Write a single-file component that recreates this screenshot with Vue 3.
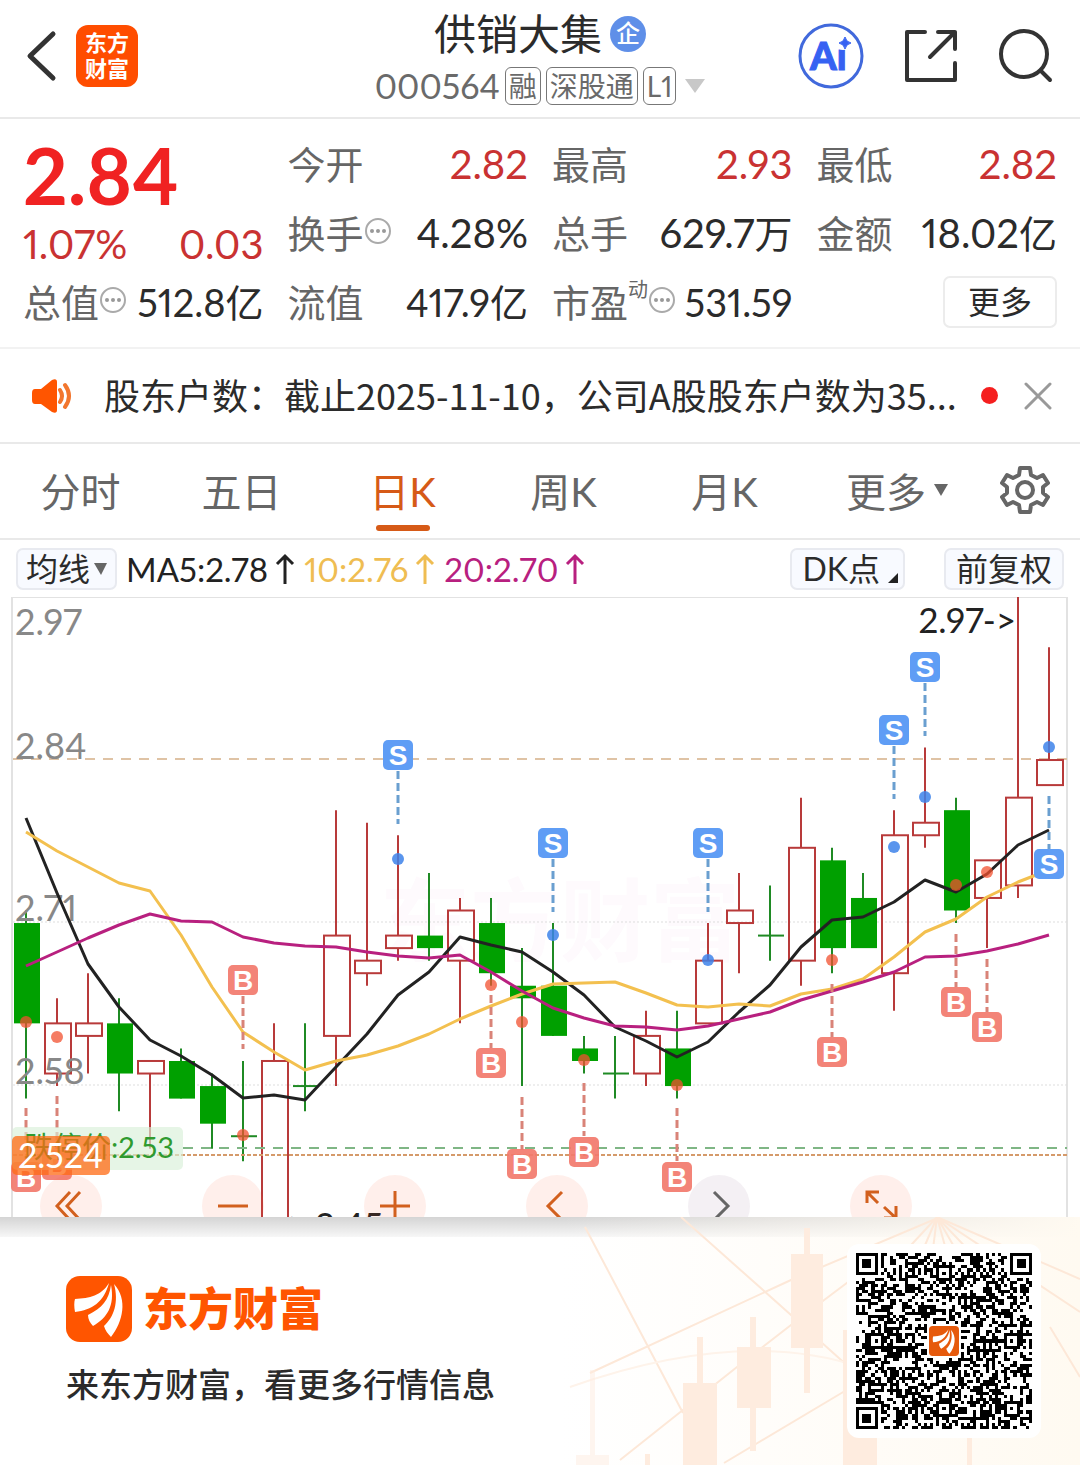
<script setup>
import { ref } from 'vue'

const activeTab = ref('日K')
const tabs = ['分时', '五日', '日K', '周K', '月K']

const quotes = [
  { label: '今开', value: '2.82', up: true },
  { label: '最高', value: '2.93', up: true },
  { label: '最低', value: '2.82', up: true },
  { label: '换手', value: '4.28%', info: true },
  { label: '总手', value: '629.7', unit: '万' },
  { label: '金额', value: '18.02', unit: '亿' },
  { label: '总值', value: '512.8', unit: '亿', info: true, compact: true },
  { label: '流值', value: '417.9', unit: '亿', compact: true },
  { label: '市盈', sup: '动', value: '531.59', info: true, compact: true },
]

const averages = [
  { text: 'MA5:2.78', cls: 'ma5' },
  { text: '10:2.76', cls: 'ma10' },
  { text: '20:2.70', cls: 'ma20' },
]

// Price to canvas coordinates: 2.97 sits on the top edge of the chart.
const px = (i) => 26 + i * 31
const py = (price) => (2.97 - price) * 1254

// [open, close, high, low]; equal open and close is drawn as a green cross
const ohlc = [
  [2.71, 2.63, 2.72, 2.57], [2.59, 2.63, 2.65, 2.58], [2.62, 2.63, 2.67, 2.59],
  [2.63, 2.59, 2.65, 2.56], [2.59, 2.6, 2.6, 2.53], [2.6, 2.57, 2.61, 2.57],
  [2.58, 2.55, 2.59, 2.53], [2.54, 2.54, 2.6, 2.52], [2.46, 2.6, 2.63, 2.45],
  [2.58, 2.58, 2.63, 2.56], [2.62, 2.7, 2.8, 2.58], [2.67, 2.68, 2.79, 2.66],
  [2.69, 2.7, 2.78, 2.68], [2.7, 2.69, 2.75, 2.68], [2.68, 2.72, 2.73, 2.63],
  [2.71, 2.67, 2.73, 2.66], [2.66, 2.65, 2.69, 2.58], [2.66, 2.62, 2.71, 2.62],
  [2.61, 2.6, 2.62, 2.59], [2.59, 2.59, 2.62, 2.57], [2.59, 2.62, 2.64, 2.58],
  [2.61, 2.58, 2.64, 2.57], [2.63, 2.68, 2.71, 2.63], [2.71, 2.72, 2.75, 2.67],
  [2.7, 2.7, 2.74, 2.68], [2.68, 2.77, 2.81, 2.66], [2.76, 2.69, 2.77, 2.67],
  [2.73, 2.69, 2.75, 2.69], [2.67, 2.78, 2.8, 2.64], [2.78, 2.79, 2.85, 2.77],
  [2.8, 2.72, 2.81, 2.71], [2.73, 2.76, 2.76, 2.69], [2.74, 2.81, 2.97, 2.73],
  [2.82, 2.84, 2.93, 2.82],
]
const candles = ohlc.map(([open, close, high, low], i) => ({
  x: px(i),
  up: close > open,
  doji: close === open,
  top: py(Math.max(open, close)),
  bottom: i === 8 ? 640 : py(Math.min(open, close)),
  high: py(high),
  low: i === 8 ? 640 : py(low),
}))

const line = (ys) => ys.map((y, i) => `${px(i)},${y - 597}`).join(' ')
const ma5 = line([818, 893, 964, 1007, 1040, 1056, 1075, 1098, 1095, 1100, 1067, 1034, 995, 972, 937, 945, 952, 972, 995, 1027, 1041, 1057, 1042, 1012, 985, 947, 920, 917, 902, 880, 892, 874, 845, 830])
const ma10 = line([832, 851, 867, 883, 891, 935, 987, 1032, 1052, 1070, 1061, 1055, 1046, 1034, 1019, 1006, 994, 984, 983, 982, 993, 1005, 1007, 1004, 1006, 994, 989, 979, 957, 932, 919, 897, 882, 870])
const ma20 = line([966, 952, 938, 925, 914, 921, 922, 937, 943, 946, 947, 952, 956, 958, 955, 972, 991, 1008, 1018, 1026, 1027, 1030, 1026, 1019, 1012, 1000, 991, 982, 972, 957, 956, 951, 944, 935])

// candle index, marker, badge centre, dot, start of the dashed stem
const signals = [
  [0, 'B', 580, 425, 511], [1, 'B', 568, 440, 499], [7, 'B', 383, 538, 399],
  [12, 'S', 158, 262, 174], [15, 'B', 466, 388, 398], [16, 'B', 567, 425, 500],
  [17, 'S', 246, 338, 262], [18, 'B', 555, 463, 486], [21, 'B', 580, 488, 511],
  [22, 'S', 246, 363, 262], [26, 'B', 455, 363, 387], [28, 'S', 133, 250, 149],
  [29, 'S', 70, 200, 86], [30, 'B', 405, 288, 337], [31, 'B', 430, 275, 362],
  [33, 'S', 267, 150, 199],
].map(([i, kind, badge, dot, stem]) => ({ x: px(i), kind, badge, dot, stem }))

const axis = [
  { text: '2.97', y: 38 },
  { text: '2.84', y: 162 },
  { text: '2.71', y: 324 },
  { text: '2.58', y: 487 },
]

// QR symbol: 57 modules with finder, alignment and timing patterns
const N = 57
function buildQr() {
  const g = Array.from({ length: N }, () => Array(N).fill(0))
  let seed = 564
  for (let r = 0; r < N; r++) {
    for (let c = 0; c < N; c++) {
      seed = (seed * 1103515245 + 12345) % 2147483648
      g[r][c] = (seed >> 16) & 1
    }
  }
  for (let k = 8; k < N - 8; k++) g[6][k] = g[k][6] = k % 2 ? 0 : 1
  // rings[n] is the colour of the square ring n modules away from the centre
  const square = (r0, c0, rings) => {
    const radius = rings.length - 1
    for (let r = -radius; r <= radius; r++) {
      for (let c = -radius; c <= radius; c++) {
        const row = g[r0 + r]
        if (row && c0 + c >= 0 && c0 + c < N) row[c0 + c] = rings[Math.max(Math.abs(r), Math.abs(c))]
      }
    }
  }
  for (const [r, c] of [[3, 3], [3, N - 4], [N - 4, 3]]) square(r, c, [1, 1, 0, 1, 0])
  for (const [r, c] of [[6, 28], [28, 6], [28, 50], [50, 28], [50, 50]]) square(r, c, [1, 0, 1])
  square(28, 28, [0, 0, 0, 0, 0, 0])
  let d = ''
  g.forEach((row, r) => row.forEach((v, c) => { if (v) d += `M${c} ${r}h1v1h-1z` }))
  return d
}
const qrPath = buildQr()

const leaf = [
  'M43 7C35 20 24 22 9 23C8 26 8 31 9 36C26 34 38 26 43 7Z',
  'M45 9C43 24 36 32 22 39C22 43 24 47 27 50C41 42 49 30 45 9Z',
  'M48 8C53 26 48 41 38 50C39 54 42 58 45 61C57 46 62 23 48 8Z',
]
</script>

<template>
  <main class="app">
    <header class="top">
      <div class="side">
        <button class="icon" aria-label="返回">
          <svg width="32" height="52" viewBox="0 0 32 52"><path d="M27 4L4 26L27 48" fill="none" stroke="#333" stroke-width="5" stroke-linecap="round" stroke-linejoin="round" /></svg>
        </button>
        <a href="#" class="app-badge"><span>东方</span><span>财富</span></a>
      </div>
      <div class="title">
        <h1>供销大集<span class="corp">企</span></h1>
        <div class="code">
          <span class="num">000564</span>
          <span class="tag">融</span><span class="tag">深股通</span><span class="tag">L1</span>
          <svg class="caret" width="20" height="14" viewBox="0 0 20 14"><path d="M0 0H20L10 14Z" fill="#c8c8c8" /></svg>
        </div>
      </div>
      <div class="side actions">
        <button class="icon" aria-label="Ai">
          <svg width="66" height="66" viewBox="0 0 66 66">
            <circle cx="33" cy="33" r="31" fill="#fff" stroke="#4169dc" stroke-width="3" />
            <text x="12" y="47" font-size="38" font-weight="900" fill="#3662f2" stroke="#3662f2">Ai</text>
            <circle cx="45" cy="20" r="7" fill="#fff" />
            <path d="M47 14Q48 19 53 20Q48 21 47 26Q46 21 41 20Q46 19 47 14Z" fill="#3662f2" stroke="#3662f2" />
          </svg>
        </button>
        <button class="icon" aria-label="分享">
          <svg width="56" height="56" viewBox="0 0 56 56" fill="none" stroke="#333" stroke-width="4" stroke-linecap="round" stroke-linejoin="round">
            <path d="M22 4H4V52H52V35M35 4H52V21M52 4L27 29" />
          </svg>
        </button>
        <button class="icon" aria-label="搜索">
          <svg width="56" height="56" viewBox="0 0 56 56" fill="none" stroke="#333" stroke-width="4" stroke-linecap="round">
            <circle cx="26" cy="26" r="23" /><path d="M43 43L52 52" />
          </svg>
        </button>
      </div>
    </header>

    <section class="quotes">
      <div class="last">
        <strong>2.84</strong>
        <div class="change"><span>1.07%</span><span>0.03</span></div>
      </div>
      <div v-for="q in quotes" :key="q.label" class="cell">
        <span class="label">{{ q.label }}<sup v-if="q.sup">{{ q.sup }}</sup></span>
        <svg v-if="q.info" class="info" width="28" height="28" viewBox="0 0 28 28">
          <circle cx="14" cy="14" r="12" fill="none" stroke="#aaa" stroke-width="2" />
          <g fill="#999"><circle cx="8" cy="14" r="2" /><circle cx="14" cy="14" r="2" /><circle cx="20" cy="14" r="2" /></g>
        </svg>
        <span class="value" :class="{ up: q.up, compact: q.compact }">{{ q.value }}<span v-if="q.unit" class="unit">{{ q.unit }}</span></span>
      </div>
      <div class="cell end"><button class="more">更多</button></div>
    </section>

    <section class="notice">
      <svg width="42" height="36" viewBox="0 0 42 36">
        <path d="M3 11H9L20 2Q25 0 25 4V32Q25 36 20 34L9 26H3Q0 26 0 22V15Q0 11 3 11Z" fill="#ff5500" />
        <path d="M28 12Q32 18 28 24M33 7Q41 18 33 29" fill="none" stroke="#f2762e" stroke-width="4" stroke-linecap="round" />
      </svg>
      <p>股东户数：截止2025-11-10，公司A股股东户数为35...</p>
      <i class="unread"></i>
      <button class="icon" aria-label="关闭">
        <svg width="28" height="28" viewBox="0 0 28 28"><path d="M2 2L26 26M26 2L2 26" stroke="#999" stroke-width="3" stroke-linecap="round" /></svg>
      </button>
    </section>

    <nav class="tabs">
      <button v-for="t in tabs" :key="t" :class="{ active: t === activeTab }" @click="activeTab = t">{{ t }}</button>
      <button>更多<svg width="14" height="12" viewBox="0 0 14 12"><path d="M0 0H14L7 12Z" fill="#666" /></svg></button>
      <button aria-label="设置">
        <svg width="50" height="50" viewBox="0 0 50 50" fill="none" stroke="#666" stroke-width="4" stroke-linejoin="round">
          <path d="M20 3H30L31 10L37 13L43 10L48 18L43 22V28L48 32L43 40L37 37L31 40L30 47H20L19 40L13 37L7 40L2 32L7 28V22L2 18L7 10L13 13L19 10Z" />
          <circle cx="25" cy="25" r="8" />
        </svg>
      </button>
    </nav>

    <div class="tools">
      <button class="chip">均线<svg width="13" height="12" viewBox="0 0 13 12"><path d="M0 0H13L7 12Z" fill="#666" /></svg></button>
      <span v-for="m in averages" :key="m.text" class="ma" :class="m.cls">{{ m.text }}<svg width="20" height="32" viewBox="0 0 20 32"><path d="M10 31V3M2 11L10 3L18 11" fill="none" stroke="currentColor" stroke-width="3" /></svg></span>
      <button class="chip dk">DK点<svg width="10" height="10" viewBox="0 0 10 10"><path d="M10 0V10H0Z" fill="#222" /></svg></button>
      <button class="chip">前复权</button>
    </div>

    <section class="chart">
      <svg class="plot" viewBox="0 0 1080 620">
        <path d="M12 620V0H1067V620" fill="none" stroke="#e2e2e2" stroke-width="2" />
        <text x="560" y="357" class="mark">东方财富</text>
        <path d="M13 325H1067M13 488H1067" stroke="#ddd" stroke-width="1" stroke-dasharray="2 2" />
        <path d="M13 162H1067" stroke="#dfc3a5" stroke-width="2" stroke-dasharray="10 8" />

        <g v-for="c in candles" :key="c.x" :class="c.up ? 'rise' : 'fall'">
          <template v-if="c.up">
            <line :x1="c.x" :x2="c.x" :y1="c.high" :y2="c.top" />
            <line :x1="c.x" :x2="c.x" :y1="c.bottom" :y2="c.low" />
            <rect :x="c.x - 12" :y="c.top" width="26" :height="c.bottom - c.top" fill="none" />
          </template>
          <template v-else>
            <line :x1="c.x" :x2="c.x" :y1="c.high" :y2="c.low" />
            <line v-if="c.doji" :x1="c.x - 12" :x2="c.x + 14" :y1="c.top" :y2="c.top" />
            <rect v-else :x="c.x - 12" :y="c.top" width="26" :height="c.bottom - c.top" stroke="none" />
          </template>
        </g>

        <g class="axis"><text v-for="a in axis" :key="a.text" x="15" :y="a.y">{{ a.text }}</text></g>

        <g fill="none" stroke-width="3" stroke-linejoin="round">
          <polyline :points="ma5" stroke="#222" />
          <polyline :points="ma10" stroke="#f3c04f" />
          <polyline :points="ma20" stroke="#b8207f" />
        </g>

        <path d="M183 551H1067" stroke="#7fb685" stroke-width="2" stroke-dasharray="10 8" />
        <path d="M13 558H1067" stroke="#d59a6a" stroke-width="2" stroke-dasharray="4 2" />

        <g v-for="s in signals" :key="s.x" :class="s.kind === 'B' ? 'buy' : 'sell'">
          <line :x1="s.x" :x2="s.x" :y1="s.stem" :y2="s.stem + 53" stroke-width="3" stroke-dasharray="8 4" />
          <circle :cx="s.x" :cy="s.dot" r="6" />
          <rect :x="s.x - 15" :y="s.badge - 15" width="30" height="30" rx="5" />
          <text :x="s.x" :y="s.badge + 10">{{ s.kind }}</text>
        </g>

        <rect x="12" y="530" width="171" height="43" rx="5" fill="#d8f0d8" fill-opacity="0.65" />
        <text x="24" y="561" class="limit">跌停价:2.53</text>
        <rect x="12" y="539" width="98" height="39" rx="5" fill="#ff6a13" fill-opacity="0.75" />
        <text x="18" y="571" class="price">2.524</text>

        <text x="1016" y="36" class="extreme" text-anchor="end">2.97-&gt;</text>
        <text x="383" y="641" class="extreme" text-anchor="end">←2.45</text>
      </svg>

      <div class="controls">
        <button aria-label="最早"><svg viewBox="0 0 62 62"><path d="M30 17L17 31L30 45M40 17L27 31L40 45" /></svg></button>
        <button aria-label="缩小"><svg viewBox="0 0 62 62"><path d="M16 31H46" /></svg></button>
        <button aria-label="放大"><svg viewBox="0 0 62 62"><path d="M16 31H46M31 16V46" /></svg></button>
        <button aria-label="前移"><svg viewBox="0 0 62 62"><path d="M36 17L22 31L36 45" /></svg></button>
        <button aria-label="后移" class="off"><svg viewBox="0 0 62 62"><path d="M26 17L40 31L26 45" /></svg></button>
        <button aria-label="全屏"><svg viewBox="0 0 62 62"><path d="M17 28V17H29M17 17L28 28M46 31V43H34M46 43L34 32" /></svg></button>
      </div>
    </section>

    <footer class="promo">
      <svg class="scene" viewBox="0 0 520 248" aria-hidden="true">
        <defs>
          <linearGradient id="warm"><stop offset="0" stop-color="#fffaf3" stop-opacity="0" /><stop offset="1" stop-color="#fffaf1" /></linearGradient>
        </defs>
        <rect width="520" height="248" fill="url(#warm)" />
        <g fill="none" stroke="#fde8d8" stroke-width="2">
          <path d="M121 0L231 98L300 160M30 156L231 63L380 0M25 10L123 196M60 243L177 150L231 108L300 56M164 246L300 165M377 0L520 62M377 0L520 95M490 110L520 160M377 0L340 40M377 0L360 40M377 0L372 40M377 0L388 40M377 0L400 40M377 0L415 40" />
          <path d="M10 170Q180 110 300 150" stroke="#fef3ea" />
        </g>
        <g fill="#feecdf">
          <path d="M231 37h32v94h-32zM244 11h6v165h-6z" /><path d="M177 130h34v61h-34zM190 100h6v134h-6z" />
          <path d="M123 166h34v82h-34zM137 120h6v128h-6z" /><path d="M283 113h34v135h-34z" />
          <path d="M407 200h5v48h-5zM85 237h5v11h-5z" /><path d="M16 238h33v10h-33zM30 153h5v90h-5z" opacity="0.5" />
        </g>
      </svg>
      <div class="brand">
        <div class="logo">
          <svg width="66" height="66" viewBox="0 0 66 66"><rect width="66" height="66" rx="14" fill="#ff5500" /><path v-for="d in leaf" :key="d" :d="d" fill="#fff" /></svg>
          <strong>东方财富</strong>
        </div>
        <p>来东方财富，看更多行情信息</p>
      </div>
      <div class="qr">
        <svg viewBox="0 0 57 57" shape-rendering="crispEdges"><path :d="qrPath" /></svg>
        <svg class="qr-logo" viewBox="0 0 66 66"><rect width="66" height="66" rx="8" fill="#e65a0c" /><path v-for="d in leaf" :key="d" :d="d" fill="#fff" /></svg>
      </div>
    </footer>
  </main>
</template>

<style>
body {
  margin: 0;
  background: #fff;
}
</style>

<style scoped>
.app {
  font-family: Lato, "Noto Sans CJK SC", sans-serif;
  font-variant-numeric: proportional-nums;
  color: #2b2b2b;
  background: #fff;
}
* {
  box-sizing: border-box;
}
button {
  padding: 0;
  border: 0;
  background: none;
  font: inherit;
  color: inherit;
  cursor: pointer;
}
svg {
  display: block;
  flex: none;
}
p,
h1 {
  margin: 0;
}

.top {
  display: grid;
  grid-template-columns: 1fr auto 1fr;
  align-items: center;
  height: 119px;
  padding: 0 26px 6px;
  border-bottom: 2px solid #e9e9e9;
}
.side {
  display: flex;
  align-items: center;
  gap: 18px;
}
.actions {
  justify-content: flex-end;
  gap: 39px;
}
.app-badge {
  display: flex;
  flex-direction: column;
  align-items: center;
  justify-content: center;
  width: 62px;
  height: 62px;
  border-radius: 12px;
  background: #ff4d00;
  color: #fff;
  font-size: 22px;
  font-weight: 700;
  line-height: 26px;
  text-decoration: none;
}
.title {
  display: flex;
  flex-direction: column;
  align-items: center;
  gap: 6px;
}
h1 {
  display: flex;
  align-items: center;
  gap: 8px;
  font-size: 42px;
  line-height: 54px;
  font-weight: 400;
}
.corp {
  width: 36px;
  height: 36px;
  border-radius: 50%;
  background: #5f8fe8;
  color: #fff;
  font-size: 24px;
  line-height: 34px;
  font-weight: 500;
  text-align: center;
}
.code {
  display: flex;
  align-items: center;
  gap: 5px;
  color: #6a6a6a;
}
.num {
  font-size: 34px;
  line-height: 38px;
}
.tag {
  height: 38px;
  padding: 0 3px;
  border: 1px solid #777;
  border-radius: 6px;
  font-size: 28px;
  line-height: 36px;
}
.caret {
  margin-left: 4px;
}

.quotes {
  display: grid;
  grid-template-columns: repeat(4, 1fr);
  grid-template-rows: repeat(3, 69px);
  column-gap: 24px;
  height: 230px;
  padding: 10px 23px 0;
  border-bottom: 2px solid #f2f2f2;
}
.last {
  grid-row: span 2;
  color: #f02222;
}
.last strong {
  display: block;
  font-size: 78px;
  line-height: 92px;
}
.change {
  display: flex;
  justify-content: space-between;
  color: #c93232;
  font-size: 40px;
  line-height: 46px;
}
.cell {
  display: flex;
  align-items: center;
  line-height: 56px;
}
.label {
  color: #666;
  font-size: 38px;
}
.label sup {
  font-size: 20px;
  line-height: 20px;
  vertical-align: 20px;
}
.info {
  margin-bottom: 4px;
}
.value {
  margin-left: auto;
  font-size: 40px;
  white-space: nowrap;
}
.compact,
.unit {
  font-size: 38px;
}
.up {
  color: #c93232;
}
.end {
  justify-content: flex-end;
}
.more {
  width: 114px;
  height: 52px;
  border: 2px solid #ececec;
  border-radius: 7px;
  font-size: 32px;
  line-height: 46px;
}

.notice {
  display: flex;
  align-items: center;
  height: 95px;
  padding: 0 28px 0 32px;
  border-bottom: 2px solid #e9e9e9;
}
.notice p {
  flex: 1;
  margin-left: 30px;
  padding-bottom: 4px;
  overflow: hidden;
  white-space: nowrap;
  font-family: "Noto Sans CJK SC", sans-serif;
  font-size: 36px;
  line-height: 52px;
}
.unread {
  width: 17px;
  height: 17px;
  margin-right: 26px;
  border-radius: 50%;
  background: #f51f1f;
}

.tabs {
  display: grid;
  grid-template-columns: repeat(5, 161fr) 184fr 71fr;
  height: 96px;
  padding-right: 20px;
  border-bottom: 2px solid #e9e9e9;
  color: #666;
  font-size: 40px;
}
.tabs button {
  position: relative;
  display: flex;
  align-items: center;
  justify-content: center;
  gap: 8px;
  padding-bottom: 2px;
}
.tabs .active {
  color: #d65a17;
}
.tabs .active::after {
  content: "";
  position: absolute;
  bottom: 7px;
  width: 54px;
  height: 6px;
  border-radius: 3px;
  background: #d65a17;
}

.tools {
  display: flex;
  align-items: center;
  height: 57px;
  padding: 0 16px;
  gap: 9px;
  font-size: 33px;
}
.chip {
  display: flex;
  align-items: center;
  justify-content: center;
  gap: 4px;
  height: 42px;
  padding: 0 8px;
  border: 2px solid #e8eaf0;
  border-radius: 7px;
  background: #f8faff;
  font-size: 32px;
  line-height: 36px;
  white-space: nowrap;
}
.chip:last-child {
  margin-left: 30px;
  padding: 0 10px;
}
.dk {
  gap: 8px;
  margin-left: auto;
  padding: 0 5px 0 10px;
  align-items: center;
}
.dk svg {
  align-self: flex-end;
  margin-bottom: 5px;
}
.ma {
  display: flex;
  align-items: center;
  gap: 7px;
  white-space: nowrap;
}
.ma5 {
  color: #222;
}
.ma10 {
  color: #efbd52;
}
.ma20 {
  color: #b8207f;
}

.chart {
  position: relative;
  overflow: hidden;
}
.plot {
  width: 100%;
  height: auto;
}
.mark {
  fill: #fefafd;
  font-size: 90px;
  font-weight: 700;
  text-anchor: middle;
}
.rise {
  stroke: #b83a3a;
  stroke-width: 2;
}
.fall {
  stroke: #1f8a24;
  fill: #00a000;
  stroke-width: 2;
}
.axis {
  fill: #888;
  font-size: 36px;
}
.buy line {
  stroke: #d98378;
}
.buy circle {
  fill: #f2502f;
  fill-opacity: 0.75;
}
.buy rect {
  fill: #f27a6c;
  fill-opacity: 0.92;
}
.sell line {
  stroke: #6a9fd0;
}
.sell circle {
  fill: #3d82ea;
  fill-opacity: 0.85;
}
.sell rect {
  fill: #5f9df5;
}
.buy text,
.sell text {
  fill: #fff;
  font-family: "Liberation Sans", sans-serif;
  font-size: 28px;
  font-weight: 700;
  text-anchor: middle;
}
.limit {
  fill: #2f9a2f;
  font-size: 29px;
}
.price {
  fill: #fff;
  font-size: 34px;
}
.extreme {
  fill: #222;
  font-size: 35px;
}
.controls {
  position: absolute;
  left: 40px;
  right: 168px;
  bottom: -20px;
  display: flex;
  justify-content: space-between;
}
.controls button {
  width: 62px;
  height: 62px;
  border-radius: 50%;
  background: rgba(255, 100, 60, 0.1);
}
.controls path {
  fill: none;
  stroke: #d2601e;
  stroke-width: 3;
}
.controls .off {
  background: rgba(110, 60, 120, 0.08);
}
.controls .off path {
  stroke: #666;
}

.promo {
  position: relative;
  display: flex;
  justify-content: space-between;
  align-items: center;
  height: 248px;
  padding: 0 39px 0 66px;
  overflow: hidden;
}
.promo::before {
  content: "";
  position: absolute;
  inset: 0 0 auto;
  height: 20px;
  background: linear-gradient(rgba(0, 0, 0, 0.17), rgba(0, 0, 0, 0.03));
}
.scene {
  position: absolute;
  right: 0;
  top: 0;
  width: 520px;
  height: 248px;
}
.brand {
  position: relative;
}
.logo {
  display: flex;
  align-items: center;
  gap: 11px;
  color: #ff5500;
}
.logo strong {
  font-size: 45px;
  line-height: 60px;
  font-weight: 900;
}
.brand p {
  margin-top: 20px;
  font-size: 33px;
  line-height: 44px;
  font-weight: 500;
}
.qr {
  position: relative;
  width: 194px;
  height: 194px;
  padding: 9px;
  border-radius: 12px;
  background: #fff;
}
.qr svg {
  width: 176px;
  height: 176px;
}
.qr .qr-logo {
  position: absolute;
  left: 82px;
  top: 82px;
  width: 30px;
  height: 30px;
}
</style>
